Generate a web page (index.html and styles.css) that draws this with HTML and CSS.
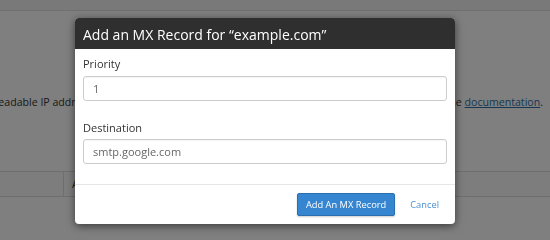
FILE: index.html
```html
<!DOCTYPE html>
<html lang="en">
<head>
<meta charset="utf-8">
<title>Add an MX Record</title>
<link rel="stylesheet" href="styles.css">
</head>
<body>
<div class="page">
  <div class="topbar"></div>
  <div class="content">
    <p class="notice">
      <span class="notice-left">readable IP address into a numeric address.</span>
      <span class="notice-right">see the <a href="#" class="doc-link">documentation</a>.</span>
    </p>
    <div class="table-row">
      <div class="cell cell-first"></div>
      <div class="cell">Actions</div>
    </div>
  </div>
</div>
<div class="backdrop"></div>
<div class="modal" role="dialog" aria-labelledby="modal-title">
  <div class="modal-header">
    <h2 id="modal-title" class="modal-title">Add an MX Record for “example.com”</h2>
  </div>
  <div class="modal-body">
    <div class="field">
      <label class="field-label" for="priority">Priority</label>
      <input class="field-input" id="priority" type="text" value="1">
    </div>
    <div class="field">
      <label class="field-label" for="destination">Destination</label>
      <input class="field-input" id="destination" type="text" value="smtp.google.com">
    </div>
  </div>
  <div class="modal-footer">
    <button class="btn-primary" type="button">Add An MX Record</button>
    <a href="#" class="btn-link">Cancel</a>
  </div>
</div>
</body>
</html>
```
FILE: styles.css
```css
html, body {
  margin: 0;
  padding: 0;
  width: 550px;
  height: 240px;
  overflow: hidden;
  background: #ffffff;
  font-family: "Open Sans", "Liberation Sans", sans-serif;
  color: #333333;
}

.page {
  width: 550px;
  height: 240px;
  background: #ffffff;
}

.topbar {
  height: 10px;
  background: #f2f2f2;
  border-bottom: 1px solid #e0e0e0;
}

.content {
  padding-top: 84px;
}

.notice {
  margin: 0 0 0 -6px;
  display: flex;
  justify-content: space-between;
  white-space: nowrap;
  font-size: 10.6px;
  line-height: 15px;
  padding-right: 7px;
  color: #333333;
}

.notice-left,
.notice-right {
  flex: none;
}

.doc-link {
  color: #2f6ea5;
  text-decoration: underline;
}

.table-row {
  margin-top: 61px;
  display: flex;
  height: 24px;
  border-top: 1px solid #dddddd;
  border-bottom: 1px solid #dddddd;
  background: #fbfbfb;
}

.cell {
  font-size: 10.6px;
  line-height: 24px;
  padding-left: 8px;
}

.cell-first {
  width: 55px;
  border-right: 1px solid #dddddd;
}

.backdrop {
  position: fixed;
  inset: 0;
  background: rgba(0, 0, 0, 0.5);
}

.modal {
  position: absolute;
  left: 75px;
  top: 18px;
  width: 380px;
  background: #ffffff;
  border-radius: 4px;
  box-shadow: 0 2px 8px rgba(0, 0, 0, 0.55);
  overflow: hidden;
}

.modal-header {
  height: 31px;
  background: #2f2f2f;
  padding: 0 8px;
  display: flex;
  align-items: center;
}

.modal-title {
  margin: 0;
  font-size: 14px;
  font-weight: 400;
  line-height: 19px;
  color: #ffffff;
  padding-top: 1px;
}

.modal-body {
  padding: 7px 8px 20px;
  border-bottom: 1px solid #e6e6e6;
}

.field + .field {
  margin-top: 19px;
}

.field-label {
  display: block;
  font-size: 11px;
  line-height: 15px;
  color: #333333;
  margin-bottom: 4.5px;
}

.field-input {
  display: block;
  box-sizing: border-box;
  width: 100%;
  height: 25px;
  margin: 0;
  padding: 0 9px;
  border: 1px solid #cccccc;
  border-radius: 3px;
  font-family: "Open Sans", "Liberation Sans", sans-serif;
  font-size: 11px;
  color: #666666;
  background: #ffffff;
  box-shadow: inset 0 1px 1px rgba(0, 0, 0, 0.04);
}

.modal-footer {
  display: flex;
  justify-content: flex-end;
  align-items: center;
  gap: 15px;
  padding: 8px 16px 8px;
}

.btn-primary {
  box-sizing: border-box;
  height: 23px;
  padding: 0 8px;
  border: 1px solid #2b6fb1;
  border-radius: 2px;
  background: #3585d1;
  color: #ffffff;
  font-family: "Open Sans", "Liberation Sans", sans-serif;
  font-size: 9.3px;
  line-height: 21px;
  box-shadow: 0 1px 2px rgba(0, 0, 0, 0.2);
}

.btn-link {
  font-size: 9.3px;
  line-height: 21px;
  color: #4a90d4;
  text-decoration: none;
}
```
